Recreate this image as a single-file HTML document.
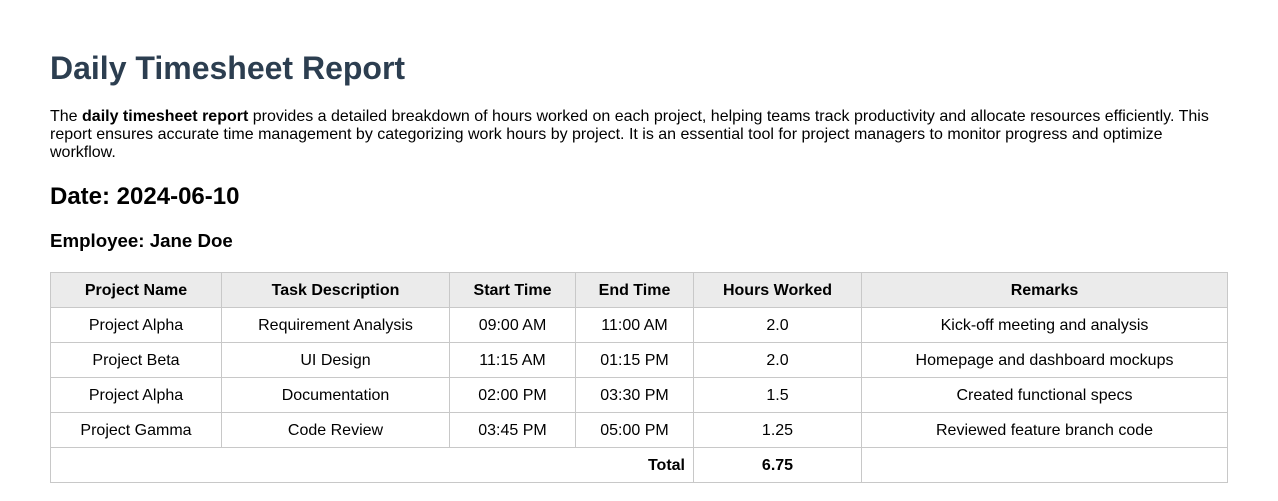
<!DOCTYPE html>
<html><head><style>
body{margin:0;background:#fff;font-family:"Liberation Sans",Arial,sans-serif;color:#000;}
.c{padding-left:50px;width:1178px;}
h1{font-size:32px;line-height:37px;margin:50px 0 0;color:#2c3e50;}
p{font-size:16px;line-height:18px;margin:21px 0 0;}
h2{font-size:24px;line-height:28px;margin:21px 0 0;}
h3{font-size:18.7px;line-height:22px;margin:19px 0 0;}
table{border-collapse:collapse;margin-top:20px;width:1178px;font-size:16px;}
th,td{border:1px solid #c8c8c8;text-align:center;height:33px;padding:1px 0 0;}
th{background:#ebebeb;font-weight:bold;}
</style></head><body><div class="c">
<h1>Daily Timesheet Report</h1>
<p>The <b>daily timesheet report</b> provides a detailed breakdown of hours worked on each project, helping teams track productivity and allocate resources efficiently. This report ensures accurate time management by categorizing work hours by project. It is an essential tool for project managers to monitor progress and optimize workflow.</p>
<h2>Date: 2024-06-10</h2>
<h3>Employee: Jane Doe</h3>
<table>
<colgroup><col style="width:171px"><col style="width:228px"><col style="width:126px"><col style="width:118px"><col style="width:168px"><col></colgroup>
<tr><th>Project Name</th><th>Task Description</th><th>Start Time</th><th>End Time</th><th>Hours Worked</th><th>Remarks</th></tr>
<tr><td>Project Alpha</td><td>Requirement Analysis</td><td>09:00 AM</td><td>11:00 AM</td><td>2.0</td><td>Kick-off meeting and analysis</td></tr>
<tr><td>Project Beta</td><td>UI Design</td><td>11:15 AM</td><td>01:15 PM</td><td>2.0</td><td>Homepage and dashboard mockups</td></tr>
<tr><td>Project Alpha</td><td>Documentation</td><td>02:00 PM</td><td>03:30 PM</td><td>1.5</td><td>Created functional specs</td></tr>
<tr><td>Project Gamma</td><td>Code Review</td><td>03:45 PM</td><td>05:00 PM</td><td>1.25</td><td>Reviewed feature branch code</td></tr>
<tr><td colspan="4" style="text-align:right;padding-right:8px;font-weight:bold">Total</td><td style="font-weight:bold">6.75</td><td></td></tr>
</table>
</div></body></html>
